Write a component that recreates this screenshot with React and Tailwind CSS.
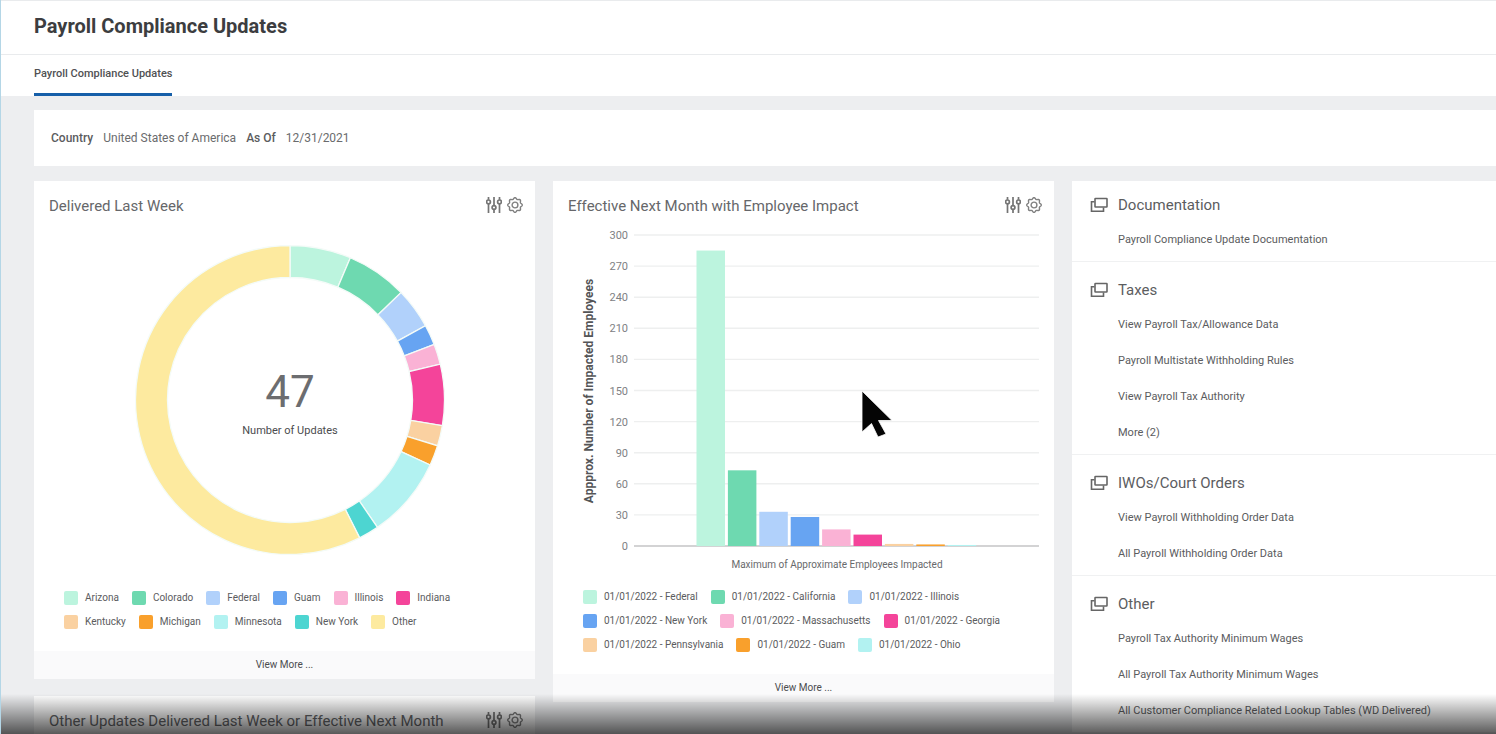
import React from "react";

const updatesByState = [
  { label: "Arizona", value: 3, color: "#bcf4de" },
  { label: "Colorado", value: 3, color: "#6ed9b0" },
  { label: "Federal", value: 2, color: "#b1d1fb" },
  { label: "Guam", value: 1, color: "#67a4f2" },
  { label: "Illinois", value: 1, color: "#fab2d5" },
  { label: "Indiana", value: 3, color: "#f4449a" },
  { label: "Kentucky", value: 1, color: "#fad1a1" },
  { label: "Michigan", value: 1, color: "#f9a02c" },
  { label: "Minnesota", value: 4, color: "#b2f2f1" },
  { label: "New York", value: 1, color: "#4dd5d1" },
  { label: "Other", value: 27, color: "#fdea9f" },
];

const employeeImpact = [
  { label: "01/01/2022 - Federal", value: 285, color: "#bcf4de" },
  { label: "01/01/2022 - California", value: 73, color: "#6ed9b0" },
  { label: "01/01/2022 - Illinois", value: 33, color: "#b1d1fb" },
  { label: "01/01/2022 - New York", value: 28, color: "#67a4f2" },
  { label: "01/01/2022 - Massachusetts", value: 16, color: "#fab2d5" },
  { label: "01/01/2022 - Georgia", value: 11, color: "#f4449a" },
  { label: "01/01/2022 - Pennsylvania", value: 2, color: "#fad1a1" },
  { label: "01/01/2022 - Guam", value: 1.5, color: "#f9a02c" },
  { label: "01/01/2022 - Ohio", value: 1, color: "#b2f2f1" },
];

const linkSections = [
  { title: "Documentation", links: ["Payroll Compliance Update Documentation"] },
  {
    title: "Taxes",
    links: [
      "View Payroll Tax/Allowance Data",
      "Payroll Multistate Withholding Rules",
      "View Payroll Tax Authority",
      "More (2)",
    ],
  },
  {
    title: "IWOs/Court Orders",
    links: ["View Payroll Withholding Order Data", "All Payroll Withholding Order Data"],
  },
  {
    title: "Other",
    links: [
      "Payroll Tax Authority Minimum Wages",
      "All Payroll Tax Authority Minimum Wages",
      "All Customer Compliance Related Lookup Tables (WD Delivered)",
    ],
  },
];

function gearPath(cx, cy, radius, depth, lobes) {
  const points = [];
  for (let i = 0; i < 128; i++) {
    const a = (i / 128) * Math.PI * 2;
    const r = radius + depth * Math.cos(lobes * a);
    points.push(`${(cx + r * Math.cos(a)).toFixed(2)} ${(cy + r * Math.sin(a)).toFixed(2)}`);
  }
  return `M${points.join("L")}Z`;
}

function SlidersIcon() {
  return (
    <svg viewBox="0 0 16 16" className="size-4" fill="none" stroke="#747474" strokeWidth="1.7" aria-hidden="true">
      <path d="M2.5 0v2.800M2.5 7V16M8 0v8M8 12.800v3.200M13.500 0v2.800M13.500 7V16" />
      <circle cx="2.5" cy="4.900" r="1.9" />
      <circle cx="8" cy="10.500" r="1.9" />
      <circle cx="13.5" cy="4.900" r="1.9" />
    </svg>
  );
}

function GearIcon() {
  return (
    <svg viewBox="0 0 16 16" className="size-4" fill="none" stroke="#808080" strokeWidth="1.4" aria-hidden="true">
      <path d={gearPath(8, 8, 6.6, 0.7, 8)} />
      <circle cx="8" cy="8" r="2.9" />
    </svg>
  );
}

function StackIcon() {
  return (
    <svg viewBox="0 0 18 16" className="h-4 w-[18px]" fill="none" stroke="#666666" strokeWidth="1.6" aria-hidden="true">
      <rect x="5" y="1.500" width="12" height="8.500" rx="0.500" />
      <path d="M4.500 4.800H1.500V14.200H13.500V10.500" />
    </svg>
  );
}

function CardHeader({ title }) {
  return (
    <div className="flex items-start justify-between pt-3 pr-3 pl-[15px]">
      <h2 className="pt-px text-[15px] leading-6 text-[#66676a]">{title}</h2>
      <div className="flex gap-[5px] pt-1">
        <button type="button" aria-label="Filters">
          <SlidersIcon />
        </button>
        <button type="button" aria-label="Settings">
          <GearIcon />
        </button>
      </div>
    </div>
  );
}

function Legend({ rows }) {
  return (
    <div className="flex flex-col gap-2 pl-[30px]">
      {rows.map((row) => (
        <ul key={row[0].label} className="flex gap-[13px]">
          {row.map((item) => (
            <li key={item.label} className="flex items-center gap-[7px] text-[10px] leading-4 whitespace-nowrap text-[#5b5c5e]">
              <span className="size-[14px] rounded-xs" style={{ backgroundColor: item.color }} />
              {item.label}
            </li>
          ))}
        </ul>
      ))}
    </div>
  );
}

function ViewMore() {
  return (
    <a href="#more" className="block bg-[#fafafb] text-center text-[10px] leading-7 text-[#4c4d4f]">
      View More ...
    </a>
  );
}

function arc(start, end, outer, inner, c) {
  const at = (r, t) => `${(c + r * Math.sin(t)).toFixed(2)} ${(c - r * Math.cos(t)).toFixed(2)}`;
  const large = end - start > Math.PI ? 1 : 0;
  return `M${at(outer, start)}A${outer} ${outer} 0 ${large} 1 ${at(outer, end)}L${at(inner, end)}A${inner} ${inner} 0 ${large} 0 ${at(inner, start)}Z`;
}

function DonutChart() {
  const total = updatesByState.reduce((sum, s) => sum + s.value, 0);
  let used = 0;
  return (
    <svg viewBox="0 0 310 310" className="mx-auto block w-[310px]" role="img" aria-label="Updates by state">
      {updatesByState.map((s) => {
        const start = (used / total) * Math.PI * 2;
        used += s.value;
        const end = (used / total) * Math.PI * 2;
        return (
          <path key={s.label} d={arc(start, end, 154.5, 122.5, 155)} fill={s.color} stroke="#f4fbf8" strokeWidth="1.300" />
        );
      })}
      <text x="155" y="162" textAnchor="middle" fontSize="44" fill="#6c6d70">
        {total}
      </text>
      <text x="155" y="189" textAnchor="middle" fontSize="11" fill="#4b4c4e">
        Number of Updates
      </text>
    </svg>
  );
}

function BarChart() {
  const base = 321;
  const unit = 311 / 300;
  const ticks = [0, 30, 60, 90, 120, 150, 180, 210, 240, 270, 300];
  return (
    <svg viewBox="0 0 501 360" className="block w-full" role="img" aria-label="Employees impacted">
      {ticks.map((t) => {
        const y = base - t * unit;
        return (
          <g key={t}>
            <line x1="81" x2="486" y1={y} y2={y} stroke={t === 0 ? "#c4c5c6" : "#eeefef"} strokeWidth={t === 0 ? 1.5 : 1.4} />
            <text x="75" y={y + 4} textAnchor="end" fontSize="11" fill="#808184">
              {t}
            </text>
          </g>
        );
      })}
      {employeeImpact.map((b, i) => (
        <rect key={b.label} x={143.5 + i * 31.4} y={base - b.value * unit} width="28.5" height={b.value * unit} fill={b.color} />
      ))}
      <text transform="translate(40 166) rotate(-90)" textAnchor="middle" fontSize="12" fontWeight="700" fill="#545557">
        Appprox. Number of Impacted Employees
      </text>
      <text x="284" y="343" textAnchor="middle" fontSize="10" fill="#68696b">
        Maximum of Approximate Employees Impacted
      </text>
    </svg>
  );
}

function LinkSection({ section, first }) {
  return (
    <section className={`border-b border-[#f0f1f2] pb-[3px] ${first ? "pt-3" : "pt-4"}`}>
      <h2 className="flex items-center gap-[10px] pl-[18px] text-[15px] leading-6 text-[#5c5d5f]">
        <StackIcon />
        {section.title}
      </h2>
      <ul className="mt-[5px] pl-[46px]">
        {section.links.map((l) => (
          <li key={l} className="text-[11px] leading-9">
            <a href="#task" className="whitespace-nowrap text-[#5b5c5e]">
              {l}
            </a>
          </li>
        ))}
      </ul>
    </section>
  );
}

export default function App() {
  return (
    <div className="relative h-screen overflow-hidden border-l border-[#b4d6e6] bg-[#edeef0] font-['Roboto','Liberation_Sans',sans-serif]">
      <header className="border-t border-b border-[#e9ebed] bg-white pl-[33px]">
        <h1 className="pt-[11px] pb-[14px] text-xl leading-7 font-bold text-[#3c3d40]">Payroll Compliance Updates</h1>
      </header>
      <nav className="flex bg-white pl-[33px]">
        <button type="button" className="border-b-[3px] border-[#165fa9] pt-[11px] pb-[11px] text-[11px] leading-4 font-medium text-[#505153]">
          Payroll Compliance Updates
        </button>
      </nav>
      <main className="pt-[14px] pl-[33px]">
        <dl className="flex items-center gap-[10px] bg-white px-[17px] py-[18px] text-xs leading-5 text-[#6a6b6d]">
          <dt className="font-medium text-[#5b5c5e]">Country</dt>
          <dd>United States of America</dd>
          <dt className="font-medium text-[#5b5c5e]">As Of</dt>
          <dd>12/31/2021</dd>
        </dl>
        <div className="mt-[15px] grid grid-cols-[501fr_501fr_424fr] items-start gap-[18px]">
          <div className="flex flex-col gap-[17px]">
            <section className="bg-white">
              <CardHeader title="Delivered Last Week" />
              <div className="pt-[27px] pb-[35px] pl-[11px]">
                <DonutChart />
              </div>
              <Legend rows={[updatesByState.slice(0, 6), updatesByState.slice(6)]} />
              <div className="pt-[21px]">
                <ViewMore />
              </div>
            </section>
            <section className="h-72 bg-white">
              <CardHeader title="Other Updates Delivered Last Week or Effective Next Month" />
            </section>
          </div>
          <section className="bg-white">
            <CardHeader title="Effective Next Month with Employee Impact" />
            <div className="pt-[7px] pb-1">
              <BarChart />
            </div>
            <Legend rows={[employeeImpact.slice(0, 3), employeeImpact.slice(3, 6), employeeImpact.slice(6)]} />
            <div className="pt-[21px]">
              <ViewMore />
            </div>
          </section>
          <aside className="bg-white">
            {linkSections.map((s, i) => (
              <LinkSection key={s.title} section={s} first={i === 0} />
            ))}
          </aside>
        </div>
      </main>
      <div className="pointer-events-none absolute inset-x-0 bottom-0 h-10 bg-linear-to-b from-transparent to-black/65" />
      <svg viewBox="0 0 34 50" className="pointer-events-none absolute top-[388px] left-[859px] h-[50px] w-[34px]" aria-hidden="true">
        <path d="M2 3V44L11.500 35.500L18 49L26 46L18.500 32.500H32Z" fill="#050505" stroke="#fff" strokeWidth="0.8" />
      </svg>
    </div>
  );
}
